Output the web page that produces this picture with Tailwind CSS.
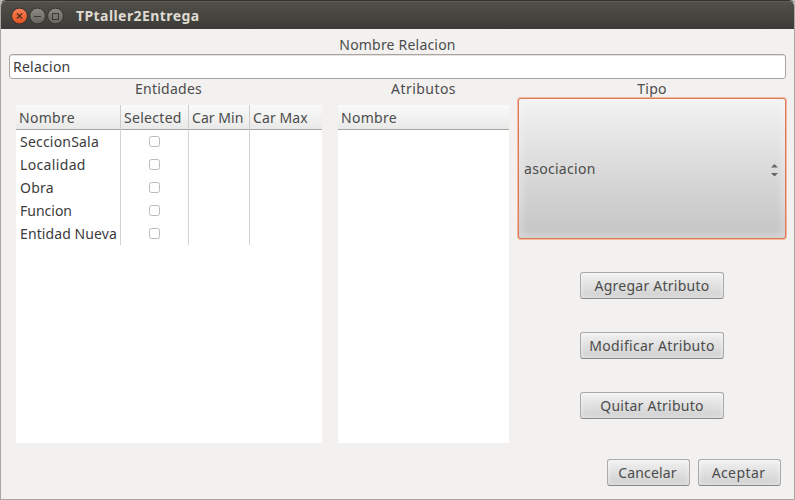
<!DOCTYPE html>
<html lang="es">
<head>
<meta charset="utf-8">
<title>TPtaller2Entrega</title>
<script src="https://cdn.jsdelivr.net/npm/@tailwindcss/browser@4"></script>
</head>
<body class="h-[500px] w-[795px] overflow-hidden bg-[#b9b9b4] font-['Noto_Sans',sans-serif] text-[14px] leading-[20px] text-[#4c4c4c]">
<div class="flex h-[500px] w-[795px] flex-col overflow-hidden rounded-t-[6px] border border-[#aaa7a0] border-t-[#32312d] bg-[#f2f1ef]">
  <header class="flex h-[28px] shrink-0 items-center border-t border-[#5f5e57] bg-linear-to-b from-[#514f49] to-[#3c3b37] pl-[10px]">
    <svg class="h-[18px] w-[54px]" viewBox="0 0 54 18" fill="none">
      <defs>
        <linearGradient id="red" x1="0" y1="0" x2="0" y2="1"><stop stop-color="#f68358"/><stop offset="1" stop-color="#e4501f"/></linearGradient>
        <linearGradient id="gray" x1="0" y1="0" x2="0" y2="1"><stop stop-color="#8b8a83"/><stop offset="1" stop-color="#65645e"/></linearGradient>
      </defs>
      <g stroke="#34332f" stroke-width="1">
        <circle cx="8.5" cy="9" r="7.900" fill="url(#red)"/>
        <circle cx="26.5" cy="9" r="7.900" fill="url(#gray)"/>
        <circle cx="44.5" cy="9" r="7.900" fill="url(#gray)"/>
      </g>
      <path d="M5.900 6.400l5.200 5.200M11.100 6.400l-5.200 5.200" stroke="#3c2a20" stroke-width="1.3"/>
      <path d="M23 9.500h7M41.500 6.500h6v6h-6z" stroke="#3c3b37" stroke-width="1.100"/>
    </svg>
    <h1 class="ml-[11px] text-[14px] font-bold tracking-[0.42px] text-[#dfdbd2]">TPtaller2Entrega</h1>
  </header>
  <main class="flex grow flex-col px-[8px]">
    <label class="mt-[6px] h-[19px] text-center tracking-[0.2px]">Nombre Relacion</label>
    <div class="flex h-[25px] w-[777px] shrink-0 items-center rounded-[3px] border border-[#a9a59e] bg-white pl-[3px] tracking-[0.25px] text-[#3c3c3c] shadow-[inset_0_1px_0_#e4e2df]">Relacion</div>
    <div class="flex h-[364px] shrink-0">
      <section class="ml-[7px] w-[306px] shrink-0">
        <h2 class="h-[26px] pr-[1px] text-center tracking-[0.25px]">Entidades</h2>
        <div class="h-[338px] bg-white">
          <div class="grid h-[25px] grid-cols-[105px_68px_61px_72px] border-b border-[#aaa69f] bg-linear-to-b from-[#fafafa] to-[#e9e9e8] leading-[25px] tracking-[0.3px]">
            <span class="border-r border-[#cecdcb] pl-[3px]">Nombre</span>
            <span class="border-r border-[#cecdcb] pl-[3px]">Selected</span>
            <span class="border-r border-[#cecdcb] pl-[3px] tracking-[0.05px]">Car Min</span>
            <span class="pl-[3px] tracking-[0.1px]">Car Max</span>
          </div>
          <div class="grid auto-rows-[23px] grid-cols-[105px_68px_61px] leading-[24px] tracking-[0.2px] text-[#3c3c3c]">
            <span class="border-r border-[#d4d3d1] pl-[4px] whitespace-nowrap">SeccionSala</span><span class="flex items-center justify-center border-r border-[#d4d3d1]"><i class="size-[11px] rounded-[2.5px] border border-[#bdbab7]"></i></span><span class="border-r border-[#d4d3d1]"></span>
            <span class="border-r border-[#d4d3d1] pl-[4px] tracking-[0.35px] whitespace-nowrap">Localidad</span><span class="flex items-center justify-center border-r border-[#d4d3d1]"><i class="size-[11px] rounded-[2.5px] border border-[#bdbab7]"></i></span><span class="border-r border-[#d4d3d1]"></span>
            <span class="border-r border-[#d4d3d1] pl-[4px] whitespace-nowrap">Obra</span><span class="flex items-center justify-center border-r border-[#d4d3d1]"><i class="size-[11px] rounded-[2.5px] border border-[#bdbab7]"></i></span><span class="border-r border-[#d4d3d1]"></span>
            <span class="border-r border-[#d4d3d1] pl-[4px] tracking-normal whitespace-nowrap">Funcion</span><span class="flex items-center justify-center border-r border-[#d4d3d1]"><i class="size-[11px] rounded-[2.5px] border border-[#bdbab7]"></i></span><span class="border-r border-[#d4d3d1]"></span>
            <span class="border-r border-[#d4d3d1] pl-[4px] tracking-[0.1px] whitespace-nowrap">Entidad Nueva</span><span class="flex items-center justify-center border-r border-[#d4d3d1]"><i class="size-[11px] rounded-[2.5px] border border-[#bdbab7]"></i></span><span class="border-r border-[#d4d3d1]"></span>
          </div>
        </div>
      </section>
      <section class="ml-[16px] w-[171px] shrink-0">
        <h2 class="h-[26px] text-center tracking-[0.45px]">Atributos</h2>
        <div class="h-[338px] bg-white">
          <div class="h-[25px] border-b border-[#aaa69f] bg-linear-to-b from-[#fafafa] to-[#e9e9e8] pl-[3px] leading-[25px] tracking-[0.3px]">Nombre</div>
        </div>
      </section>
      <section class="ml-[8px] flex w-[270px] shrink-0 flex-col items-center">
        <h2 class="h-[18px] text-center tracking-[0.3px]">Tipo</h2>
        <div class="w-[270px] rounded-[4px] bg-[#f5b79f] p-px">
          <div class="flex h-[141px] items-center justify-between rounded-[3px] border border-[#dd7b57] bg-linear-to-b from-[#f2f2f2] to-[#c4c4c4] pr-[7px] pl-[5px] shadow-[inset_0_0_10px_2px_#ffffff60]">
            <span class="tracking-[0.3px]">asociacion</span>
            <svg class="mt-[2px] h-[12px] w-[7px]" viewBox="0 0 7 12" fill="#666"><path d="M0 3.500L3.500 0 7 3.500zM0 9l3.500 3.500L7 9z"/></svg>
          </div>
        </div>
        <div class="mt-[32px] flex w-[144px] flex-col gap-[33px]">
          <button class="h-[27px] rounded-[3px] border border-[#aaa] border-b-[#898989] bg-linear-to-b from-[#f1f1f1] to-[#d0d0d0] tracking-[0.25px] whitespace-nowrap shadow-[inset_0_0_4px_1px_#ffffff70]">Agregar Atributo</button>
          <button class="h-[27px] rounded-[3px] border border-[#aaa] border-b-[#898989] bg-linear-to-b from-[#f1f1f1] to-[#d0d0d0] tracking-[0.3px] whitespace-nowrap shadow-[inset_0_0_4px_1px_#ffffff70]">Modificar Atributo</button>
          <button class="h-[27px] rounded-[3px] border border-[#aaa] border-b-[#898989] bg-linear-to-b from-[#f1f1f1] to-[#d0d0d0] tracking-[0.25px] whitespace-nowrap shadow-[inset_0_0_4px_1px_#ffffff70]">Quitar Atributo</button>
        </div>
      </section>
    </div>
    <footer class="mt-[16px] flex justify-end gap-[8px] pr-[5px]">
      <button class="h-[27px] w-[83px] rounded-[3px] border border-[#aaa] border-b-[#898989] bg-linear-to-b from-[#f1f1f1] to-[#d0d0d0] pr-[2px] tracking-[0.15px] shadow-[inset_0_0_4px_1px_#ffffff70]">Cancelar</button>
      <button class="h-[27px] w-[83px] rounded-[3px] border border-[#aaa] border-b-[#898989] bg-linear-to-b from-[#f1f1f1] to-[#d0d0d0] pr-[2px] tracking-[0.4px] shadow-[inset_0_0_4px_1px_#ffffff70]">Aceptar</button>
    </footer>
  </main>
</div>
</body>
</html>
